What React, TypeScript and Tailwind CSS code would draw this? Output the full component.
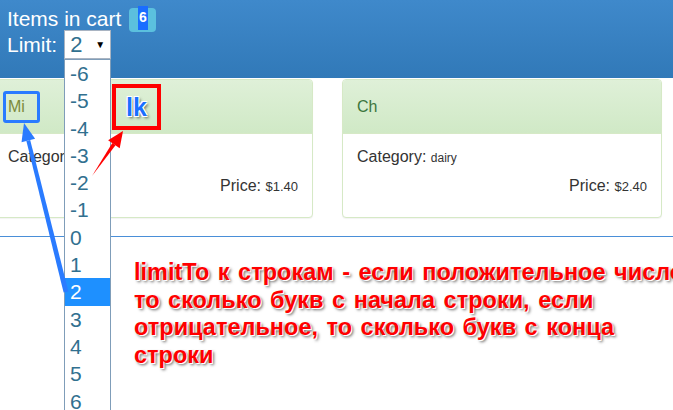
import React from 'react'

const limits = [-6, -5, -4, -3, -2, -1, 0, 1, 2, 3, 4, 5, 6]

function ProductCard({
  title,
  category,
  price,
  titleColor = 'text-[#3c763d]',
}: {
  title: string
  category: string
  price: string
  titleColor?: string
}) {
  return (
    <div className="h-[139px] w-[320px] shrink-0 overflow-hidden rounded-[4px] border border-[#d6e9c6] bg-white shadow-[0_1px_1px_rgba(0,0,0,0.05)]">
      <div className={`flex h-[54px] items-center border-b border-[#d6e9c6] bg-gradient-to-b from-[#dff0d8] to-[#d0e9c6] px-[14px] text-[16px] ${titleColor}`}>
        {title}
      </div>
      <div className="px-[14px] pt-[13px] text-[#333]">
        <div className="text-[16px] leading-[20px]">
          Category: <span className="text-[12px]">{category}</span>
        </div>
        <div className="mt-[8px] text-right text-[16px] leading-[20px]">
          Price: <span className="text-[13px]">{price}</span>
        </div>
      </div>
    </div>
  )
}

export default function App() {
  return (
    <div className="relative h-[410px] w-[673px] overflow-hidden bg-white font-['Liberation_Sans',Arial,sans-serif]">
      <header className="h-[78px] bg-gradient-to-b from-[#3f89cb] to-[#3179b8] px-[7px] pt-[5px] text-white">
        <div className="flex h-[27px] items-center">
          <span className="text-[21px] leading-none">Items in cart</span>
          <span className="ml-[8px] mt-[2px] flex h-[24px] w-[27px] items-center justify-center rounded-[4px] bg-[#5bc0de]">
            <span className="-mt-[4px] flex h-[24px] items-center bg-[#1a6dff] px-[1px] text-[14px] font-bold">6</span>
          </span>
        </div>
        <div className="mt-[-2px] flex items-center">
          <span className="text-[21px] leading-none">Limit:</span>
          <div className="ml-[7px] flex h-[29px] w-[47px] items-center border border-[#a9b4c2] bg-white pl-[5px]">
            <span className="text-[22px] leading-none text-[#31708f]">2</span>
            <span className="ml-auto mr-[5px] text-[10px] text-black">▼</span>
          </div>
        </div>
      </header>

      <div className="ml-[-7px] mt-px flex gap-[29px]">
        <ProductCard title="Mi" category="dairy" price="$1.40" titleColor="text-[#7d8a3a]" />
        <ProductCard title="Ch" category="dairy" price="$2.40" />
      </div>

      <div className="mt-[18px] h-px bg-[#4a8fd8]" />

      <p className="ml-[134px] mt-[22px] whitespace-nowrap text-[23.5px] font-bold leading-[27.5px] text-[#ff0000] [word-spacing:2px] [text-shadow:1px_1px_0_#fff,2px_2px_3px_rgba(0,0,0,0.6)]">
        limitTo к строкам - если положительное число
        <br />
        то сколько букв с начала строки, если
        <br />
        отрицательное, то сколько букв с конца
        <br />
        строки
      </p>

      {/* open select list */}
      <ul className="absolute left-[64px] top-[59px] w-[47px] border border-[#7f9db9] bg-white pb-[20px]">
        {limits.map((n) => (
          <li
            key={n}
            className={
              n === 2
                ? 'h-[27.3px] bg-[#1e90ff] pl-[5px] text-[21px] leading-[27.3px] text-white'
                : 'h-[27.3px] pl-[5px] text-[21px] leading-[27.3px] text-[#31708f]'
            }
          >
            {n}
          </li>
        ))}
      </ul>

      {/* annotations */}
      <div className="absolute left-[3px] top-[91px] h-[32px] w-[37px] rounded-[3px] border-[3px] border-[#2a7bff]" />
      <div className="absolute left-[112px] top-[84px] flex h-[46px] w-[49px] items-center justify-center border-[4px] border-[#ff0000]">
        <span className="text-[25px] font-bold leading-none text-[#1a6fff] [text-shadow:-1px_-1px_0_#fff,1px_-1px_0_#fff,-1px_1px_0_#fff,1px_1px_0_#fff,2px_2px_3px_rgba(0,0,0,0.6)]">
          lk
        </span>
      </div>
      <svg className="pointer-events-none absolute left-0 top-0" width="673" height="410" viewBox="0 0 673 410">
        <polygon points="68.4,291.4 63.6,292.6 26.4,141 30.2,140" fill="#2a7bff" />
        <polygon points="24,123 35.1,138.8 21.5,142.2" fill="#2a7bff" />
        <polygon points="92,176 115.5,145.3 112.3,143.1" fill="#ff0000" />
        <polygon points="123,131 119.7,148.2 108.1,140.2" fill="#ff0000" />
      </svg>
    </div>
  )
}
